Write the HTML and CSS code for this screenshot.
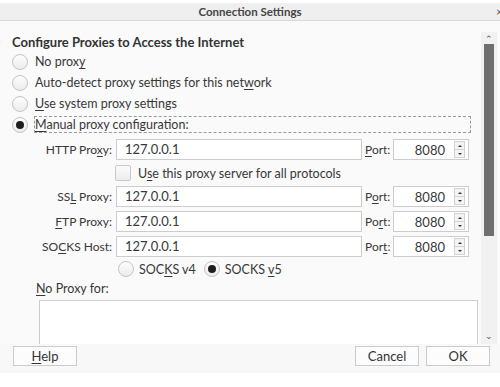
FILE: index.html
```html
<!DOCTYPE html>
<html lang="en">
  <head>
    <meta charset="UTF-8" />
    <meta name="viewport" content="width=device-width, initial-scale=1.0" />
    <title>Connection Settings</title>
    <link rel="stylesheet" href="styles.css">
  </head>
  <body>
    <div class="window">
      <div class="titlebar">
        <span class="title">Connection Settings</span>
        <span class="close">&times;</span>
      </div>

      <div class="main">
        <div class="content">
          <h1>Configure Proxies to Access the Internet</h1>

          <div class="radio-list">
            <label class="radio-row"><span class="radio"></span><span>No prox<u>y</u></span></label>
            <label class="radio-row"><span class="radio"></span><span>Auto-detect proxy settings for this net<u>w</u>ork</span></label>
            <label class="radio-row"><span class="radio"></span><span><u>U</u>se system proxy settings</span></label>
            <label class="radio-row"><span class="radio checked"></span><span class="focus"><u>M</u>anual proxy configuration:</span></label>
          </div>

          <div class="proxy-grid">
            <span class="field-label">HTTP Pro<u>x</u>y:</span>
            <span class="text-input">127.0.0.1</span>
            <span class="port-label"><u>P</u>ort:</span>
            <span class="spin"><span class="spin-value">8080</span><span class="spin-buttons"><i class="up"></i><i class="down"></i></span></span>

            <label class="check-row"><span class="checkbox"></span><span>U<u>s</u>e this proxy server for all protocols</span></label>

            <span class="field-label">SS<u>L</u> Proxy:</span>
            <span class="text-input">127.0.0.1</span>
            <span class="port-label">P<u>o</u>rt:</span>
            <span class="spin"><span class="spin-value">8080</span><span class="spin-buttons"><i class="up"></i><i class="down"></i></span></span>

            <span class="field-label"><u>F</u>TP Proxy:</span>
            <span class="text-input">127.0.0.1</span>
            <span class="port-label">Po<u>r</u>t:</span>
            <span class="spin"><span class="spin-value">8080</span><span class="spin-buttons"><i class="up"></i><i class="down"></i></span></span>

            <span class="field-label">SO<u>C</u>KS Host:</span>
            <span class="text-input">127.0.0.1</span>
            <span class="port-label">Por<u>t</u>:</span>
            <span class="spin"><span class="spin-value">8080</span><span class="spin-buttons"><i class="up"></i><i class="down"></i></span></span>
          </div>

          <div class="socks-versions">
            <label class="socks-option"><span class="radio"></span><span>SOC<u>K</u>S v4</span></label>
            <label class="socks-option"><span class="radio checked"></span><span>SOCKS <u>v</u>5</span></label>
          </div>

          <div class="noproxy-label"><u>N</u>o Proxy for:</div>
          <div class="textarea"></div>
        </div>

        <div class="scrollbar">
          <span class="arrow">&#8963;</span>
          <div class="thumb"></div>
          <div class="track"></div>
          <span class="arrow down">&#8964;</span>
        </div>
      </div>

      <div class="footer">
        <button class="btn"><u>H</u>elp</button>
        <div class="footer-right">
          <button class="btn">Cancel</button>
          <button class="btn">OK</button>
        </div>
      </div>
    </div>
  </body>
</html>
```

FILE: styles.css
```css
body {
  margin: 0;
  background-color: #ffffff;
  font-family: Lato, "Noto Sans", sans-serif;
  font-size: 12.5px;
  color: #383838;
  overflow: hidden;
}

u {
  text-decoration-thickness: 1px;
  text-underline-offset: 2px;
}

.window {
  width: 500px;
  height: 387px;
  display: flex;
  flex-direction: column;
}

.titlebar {
  margin-top: 3px;
  height: 17px;
  background-color: #efefef;
  border-bottom: 1px solid #d9d9d9;
  display: flex;
  align-items: center;
  justify-content: center;
  position: relative;
}
.title {
  font-weight: bold;
  font-size: 11.5px;
  color: #444;
}
.close {
  position: absolute;
  right: -3px;
  top: 0;
  font-size: 12px;
  line-height: 17px;
  color: #555;
}

.main {
  height: 323px;
  display: flex;
  background-color: #fafafa;
  overflow: hidden;
}
.content {
  flex: 1;
  padding-left: 12px;
}

h1 {
  margin: 14px 0 0;
  font-size: 13px;
  font-weight: bold;
  line-height: 15px;
  color: #333;
}

.radio-list {
  margin-top: 1px;
  display: flex;
  flex-direction: column;
}
.radio-row {
  height: 21px;
  display: flex;
  align-items: center;
  gap: 7px;
}

.radio {
  width: 14px;
  height: 14px;
  border: 1px solid #c4c4c4;
  border-radius: 50%;
  background: linear-gradient(#fdfdfd, #ececec);
  display: flex;
  align-items: center;
  justify-content: center;
  flex-shrink: 0;
}
.radio.checked::after {
  content: "";
  width: 8px;
  height: 8px;
  border-radius: 50%;
  background-color: #1e1e1e;
}

.focus {
  margin-left: -1px;
  width: 435px;
  height: 15px;
  border: 1px dashed #9a9a9a;
  line-height: 15px;
}

.proxy-grid {
  margin: 4px 0 0 24px;
  display: grid;
  grid-template-columns: 77px 246px 25px 76px;
  grid-template-rows: 21px 18px 21px 21px 21px;
  column-gap: 3px;
  row-gap: 4px;
  align-items: center;
}
.field-label {
  text-align: right;
  padding-right: 1px;
  font-size: 12px;
}
.text-input {
  height: 19px;
  border: 1px solid #cdcdcd;
  background-color: #fff;
  padding-left: 8px;
  line-height: 19px;
  font-size: 13px;
}
.port-label {
  font-size: 12px;
}
.spin {
  height: 19px;
  border: 1px solid #cdcdcd;
  background-color: #fff;
  display: flex;
  align-items: center;
  justify-content: flex-end;
  font-size: 13px;
}
.spin-value {
  margin-right: 9px;
}
.spin-buttons {
  width: 9px;
  height: 15px;
  margin-right: 3px;
  display: flex;
  flex-direction: column;
  border: 1px solid #d2d2d2;
  background-color: #f4f4f4;
}
.spin-buttons i {
  flex: 1;
  display: flex;
  align-items: center;
  justify-content: center;
}
.spin-buttons i.up {
  border-bottom: 1px solid #d2d2d2;
}
.spin-buttons i.up::after {
  content: "";
  border-left: 2px solid transparent;
  border-right: 2px solid transparent;
  border-bottom: 2px solid #333;
}
.spin-buttons i.down::after {
  content: "";
  border-left: 2px solid transparent;
  border-right: 2px solid transparent;
  border-top: 2px solid #333;
}

.check-row {
  grid-column: 2 / 5;
  display: flex;
  align-items: center;
  gap: 7px;
  margin-left: -1px;
}
.checkbox {
  width: 14px;
  height: 14px;
  border: 1px solid #c8c8c8;
  border-radius: 2px;
  background: linear-gradient(#fbfbfb, #ededed);
}

.socks-versions {
  margin: 4px 0 0 106px;
  height: 16px;
  display: flex;
  gap: 8px;
}
.socks-option {
  display: flex;
  align-items: center;
  gap: 5px;
}

.noproxy-label {
  margin: 4px 0 0 24px;
  height: 16px;
  line-height: 16px;
}

.textarea {
  margin: 3px 0 0 27px;
  width: 437px;
  height: 60px;
  border: 1px solid #cdcdcd;
  background-color: #fff;
}

.scrollbar {
  width: 16px;
  margin: 11px 3px 0 0;
  background-color: #f1f1f1;
  display: flex;
  flex-direction: column;
  align-items: center;
}
.arrow {
  height: 12px;
  font-size: 9px;
  line-height: 14px;
  color: #555;
}
.arrow.down {
  line-height: 8px;
}
.thumb {
  width: 10px;
  height: 192px;
  background-color: #6f6f6f;
}
.track {
  flex: 1;
}

.footer {
  height: 27px;
  padding: 2px 10px 0 13px;
  background-color: #f8f8f8;
  display: flex;
  justify-content: space-between;
  align-items: flex-start;
}
.footer-right {
  display: flex;
  gap: 7px;
}
.btn {
  width: 64px;
  height: 20px;
  padding: 0;
  font-family: Lato, "Noto Sans", sans-serif;
  font-size: 13px;
  color: #333;
  background-color: #fcfcfc;
  border: 1px solid #cbcbcb;
  border-radius: 0;
}
```
